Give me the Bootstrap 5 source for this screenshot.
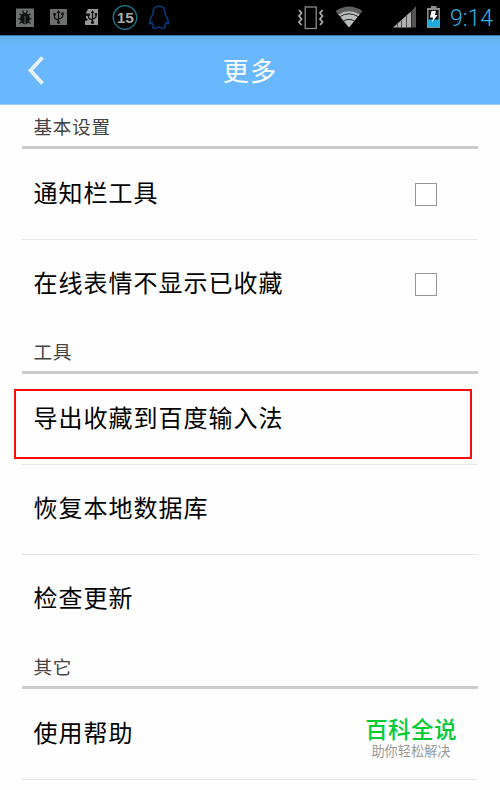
<!DOCTYPE html>
<html lang="zh-CN">
<head>
<meta charset="utf-8">
<meta name="viewport" content="width=device-width, initial-scale=1">
<title>更多</title>
<link href="https://cdn.jsdelivr.net/npm/bootstrap@5.3.0/dist/css/bootstrap.min.css" rel="stylesheet">
<style>
body{font-family:"Liberation Sans","Noto Sans CJK SC",sans-serif;background:#fefefe;height:790px;overflow:hidden}
.status-bar{height:35px;background:#000}
.status-bar svg{height:35px;flex:none}
.clock{font:23px/37px Roboto,sans-serif;font-weight:300;color:#33b5e5;width:50px;height:35px}
.app-bar{height:70px;background:linear-gradient(#64afee,#69b7fc 9px);border-top:1px solid #3f78a8;border-bottom:1px solid #9dd0fd}
.app-title{font-size:26px;line-height:68px;padding-top:2px;letter-spacing:1.2px;color:#fff;font-weight:400}
.back{left:26px;top:20px}
.settings{margin:0 22px}
.group-title{height:44px;padding:1px 0 0 11.5px;font-size:18.6px;letter-spacing:.7px;line-height:44px;color:#444;border-bottom:3px solid #ccc}
.group-title span{display:block;height:40px}
.setting{height:91px;padding:0 41px 0 11.5px;border-bottom:1px solid #e6e6e6;font-size:24px;letter-spacing:1px;color:#000}
.setting.short{height:90px;padding-bottom:1px}
.setting.final{height:90px;border-bottom:0;padding-bottom:3px}
.tick.form-check-input{width:22.5px;height:23px;border:1.5px solid #959595;border-radius:0;margin:1px 0 0;background:#fff}
.highlight{left:-8px;right:6px;top:15px;height:70px;border:2px solid #f80c0c}
.brand{right:20px;top:28px;width:94px;text-align:center;letter-spacing:0}
.brand-name{font-size:22.5px;line-height:28px;color:#00cb35;font-weight:500;letter-spacing:.4px}
.brand-note{font-size:13.2px;line-height:13px;color:#999}
</style>
<script src="https://cdn.jsdelivr.net/npm/bootstrap@5.3.0/dist/js/bootstrap.bundle.min.js"></script>
</head>
<body>
<header>
<div class="status-bar d-flex justify-content-between">
  <div class="d-flex">
    <svg width="42" viewBox="0 0 42 35"><path fill="#6c706e" d="M16 8.500h18v18.500H16z"/><g stroke="#111" fill="none" stroke-width="1.200"><path d="M19.500 14l2.500 1.500M30.500 14l-2.500 1.500M18.500 18.800H31.500M19.500 23.500l2.500-2M30.500 23.500l-2.500-2M22.500 10.500l1 2.500M27.500 10.500l-1 2.500"/></g><ellipse cx="25" cy="18.500" rx="4.800" ry="5.800" fill="#111"/><path stroke="#6c706e" stroke-width=".8" d="M25 16v8"/></svg>
    <svg width="32" viewBox="42 0 32 35"><path fill="#6c706e" d="M50 9h17v16H50z"/><g stroke="#111" fill="none" stroke-width="1.3"><path d="M58.500 12v11M54.500 14v3q0 2 4 3M62.500 14v2.500q0 1.500-4 2.500"/></g><path fill="#111" d="M56.500 13l2-3 2 3zM53.300 13h2.500v2.500h-2.500zM61.300 12.500h2.500V15h-2.500z"/><circle cx="58.500" cy="22.500" r="1.400" fill="#111"/></svg>
    <svg width="34" viewBox="74 0 34 35"><path fill="#999" d="M88 9h10v16H85v-4l3-1-2-2v-2l2-1-2-2z"/><g stroke="#151515" fill="none" stroke-width="1.400"><path d="M92.500 12v11M88.500 15v2q0 2 4 3M96 14v2.500q0 1.500-3.500 2.500"/></g><path fill="#151515" d="M90.500 13l2-3 2 3zM87 13.500h3V16h-3zM94.700 13h2.500v2.500h-2.500z"/><circle cx="92.500" cy="22.500" r="1.600" fill="#151515"/></svg>
    <svg width="36" viewBox="108 0 36 35"><circle cx="125" cy="17.500" r="11.700" fill="none" stroke="#1c7084" stroke-width="1.500"/><text x="125.300" y="23.300" text-anchor="middle" font-family="Liberation Sans, sans-serif" font-weight="700" font-size="15.500" fill="#aaa">15</text></svg>
    <svg width="30" viewBox="144 0 30 35"><path fill="none" stroke="#073b80" stroke-width="1.500" stroke-linejoin="round" d="M159 6.300c-4 0-6 3-6 6.700 0 2-3.500 5.500-3.500 10 0 1.500 1 1.200 2.500-.7 0 1.700.8 2.700 1.700 3.500-2 1-1.500 2.400.8 2.400 2 0 3.500-.4 4.500-1 1 .6 2.500 1 4.500 1 2.300 0 2.800-1.400.8-2.400.9-.8 1.700-1.800 1.700-3.500 1.500 1.900 2.500 2.200 2.500.7 0-4.500-3.500-8-3.500-10 0-3.700-2-6.700-6-6.700z"/></svg>
  </div>
  <div class="d-flex">
    <svg width="38" viewBox="291 0 38 35"><rect x="305.200" y="7" width="11" height="21.500" fill="none" stroke="#8c8c8c" stroke-width="1.300"/><path fill="none" stroke="#aaa" stroke-width="1.800" d="M299 10l2.500 3-2.500 3 2.500 3-2.500 3 2.500 3M322.500 10l-2.500 3 2.500 3-2.500 3 2.500 3-2.500 3"/></svg>
    <svg width="53" viewBox="329 0 53 35"><path fill="#606060" d="M349 27.500L335.500 11q13.500-9 27 0z"/><path fill="#b9bdbd" d="M349 27.500L338.500 14.500q10.500-6.500 21 0z"/><path fill="none" stroke="#222" stroke-width="1" d="M339.500 16.800q9.500-6 19 0M343 21.300q6-3.800 12 0"/></svg>
    <svg width="42" viewBox="382 0 42 35"><path fill="#b0b0b0" d="M393 27.500L411 11.500v16z"/><path fill="#555" d="M411.500 11l4.500-5v21.500h-4.500z"/><path stroke="#333" stroke-width=".8" d="M397.500 24v3.500M401.500 20.500v7M406.500 16v11.500"/></svg>
    <svg width="26" viewBox="424 0 26 35"><path fill="#8e8e8e" d="M427 8h4V6h5.500v2h3.500v20h-13z"/><path fill="#111" d="M428.500 10h10v10h-10z"/><path fill="#20a9dc" d="M428 19.500h11v7.500h-11z"/><path fill="#fff" d="M431.500 11h4.500l-1 4h2.500l-5.500 7.500 1-5h-3z"/></svg>
    <div class="clock">9:14</div>
  </div>
</div>
<nav class="app-bar position-relative text-center">
  <a class="back position-absolute d-block lh-1" href="#" aria-label="返回"><svg width="20" height="30" viewBox="0 0 20 30"><path d="M16.500 1.500L4.500 14.500l12 13" fill="none" stroke="#e6f3ff" stroke-width="3.800"/></svg></a>
  <h1 class="app-title m-0">更多</h1>
</nav>
</header>
<main class="settings">
  <section>
    <h2 class="group-title m-0 fw-normal"><span>基本设置</span></h2>
    <label class="setting d-flex align-items-center justify-content-between">通知栏工具<input class="tick form-check-input" type="checkbox"></label>
    <label class="setting final d-flex align-items-center justify-content-between">在线表情不显示已收藏<input class="tick form-check-input" type="checkbox"></label>
  </section>
  <section>
    <h2 class="group-title m-0 fw-normal"><span>工具</span></h2>
    <div class="setting position-relative d-flex align-items-center">导出收藏到百度输入法<div class="highlight position-absolute"></div></div>
    <div class="setting short d-flex align-items-center">恢复本地数据库</div>
    <div class="setting final d-flex align-items-center">检查更新</div>
  </section>
  <section>
    <h2 class="group-title m-0 fw-normal"><span>其它</span></h2>
    <div class="setting position-relative d-flex align-items-center">使用帮助
      <div class="brand position-absolute"><div class="brand-name">百科全说</div><div class="brand-note">助你轻松解决</div></div>
    </div>
  </section>
</main>
</body>
</html>
